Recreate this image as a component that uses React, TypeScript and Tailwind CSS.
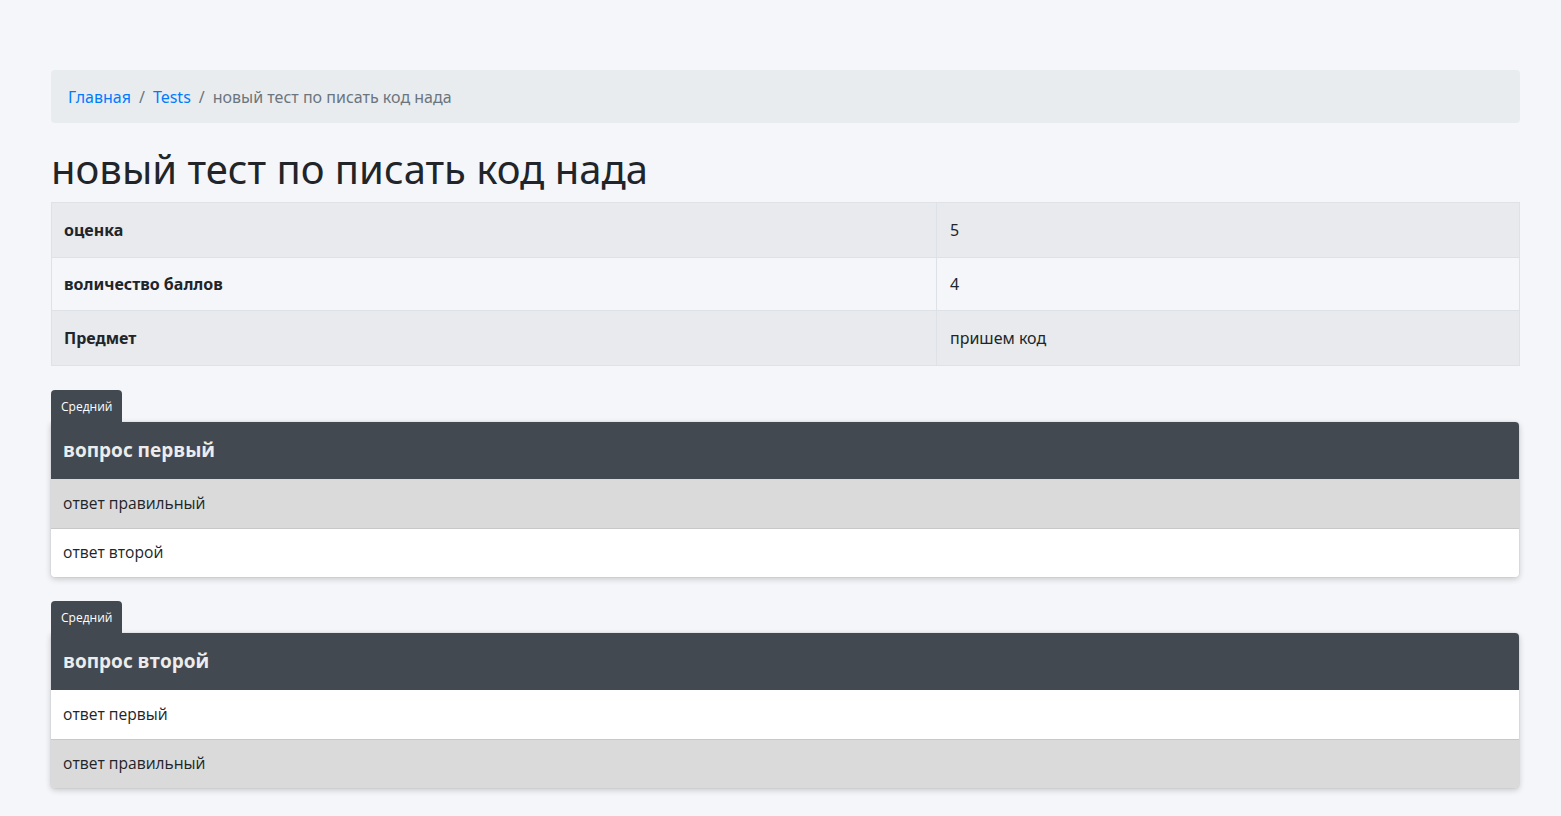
const rows = [
  { label: "оценка", value: "5", h: "h-[55px]" },
  { label: "воличество баллов", value: "4", h: "h-[53px]" },
  { label: "Предмет", value: "пришем код", h: "h-[55px]" },
];

const questions = [
  {
    level: "Средний",
    title: "вопрос первый",
    answers: [
      { text: "ответ правильный", correct: true },
      { text: "ответ второй", correct: false },
    ],
  },
  {
    level: "Средний",
    title: "вопрос второй",
    answers: [
      { text: "ответ первый", correct: false },
      { text: "ответ правильный", correct: true },
    ],
  },
];

function QuestionCard({ q }: { q: (typeof questions)[number] }) {
  return (
    <div className="mt-6 mr-px">
      <div className="inline-block rounded-t-[4px] bg-[#424950] px-[10px] pt-[8px] pb-[6px] text-[12px] leading-[18px] text-white font-['Open_Sans',sans-serif]">
        {q.level}
      </div>
      <div className="overflow-hidden rounded-b-[4px] rounded-tr-[4px] bg-white shadow-[0_0_1px_rgba(0,0,0,0.3),0_2px_6px_rgba(0,0,0,0.2)] font-['Open_Sans',sans-serif]">
        <div className="flex h-[57px] items-center bg-[#424950] px-3 text-[19px] font-bold text-[#ececec]">
          {q.title}
        </div>
        {q.answers.map((a, i) => (
          <div
            key={i}
            className={`flex h-[49px] items-center px-3 text-[15.6px] text-[#212529] ${
              a.correct ? "bg-[#dadada]" : "bg-white"
            } ${i > 0 ? "border-t border-[#c8c8c8]" : ""}`}
          >
            {a.text}
          </div>
        ))}
      </div>
    </div>
  );
}

export default function App() {
  return (
    <div className="min-h-screen bg-[#f4f6f9] pl-[51px] pr-[41px] pt-[70px] pb-8 text-[#212529] font-['Noto_Sans',sans-serif]">
      <nav className="flex h-[53px] items-center gap-2 rounded-[4px] bg-[#e9ecef] px-[17px] text-[16px]">
        <a className="text-[#007bff]" href="#">
          Главная
        </a>
        <span className="text-[#6c757d]">/</span>
        <a className="text-[#007bff]" href="#">
          Tests
        </a>
        <span className="text-[#6c757d]">/</span>
        <span className="text-[#6c757d]">новый тест по писать код нада</span>
      </nav>

      <h1 className="mt-[20px] mb-[7px] text-[40px] leading-[52px]">
        новый тест по писать код нада
      </h1>

      <table className="w-full border-collapse text-[16px]">
        <tbody>
          {rows.map((r, i) => (
            <tr key={i} className={i % 2 === 0 ? "bg-[#e8eaed]" : "bg-[#f4f6f9]"}>
              <th className={`${r.h} w-[885px] border border-[#dee2e6] px-3 text-left font-bold`}>
                {r.label}
              </th>
              <td className={`${r.h} border border-[#dee2e6] px-[13px]`}>{r.value}</td>
            </tr>
          ))}
        </tbody>
      </table>

      {questions.map((q, i) => (
        <QuestionCard key={i} q={q} />
      ))}
    </div>
  );
}
